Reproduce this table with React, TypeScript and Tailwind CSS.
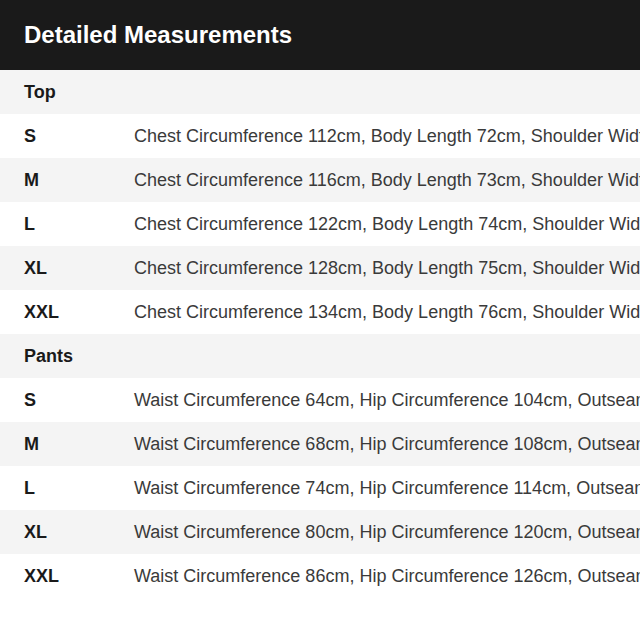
const sections = [
  {
    name: "Top",
    rows: [
      { size: "S", text: "Chest Circumference 112cm, Body Length 72cm, Shoulder Width 50cm, Sleeve Length 60cm" },
      { size: "M", text: "Chest Circumference 116cm, Body Length 73cm, Shoulder Width 52cm, Sleeve Length 61cm" },
      { size: "L", text: "Chest Circumference 122cm, Body Length 74cm, Shoulder Width 54cm, Sleeve Length 62cm" },
      { size: "XL", text: "Chest Circumference 128cm, Body Length 75cm, Shoulder Width 56cm, Sleeve Length 63cm" },
      { size: "XXL", text: "Chest Circumference 134cm, Body Length 76cm, Shoulder Width 58cm, Sleeve Length 64cm" },
    ],
  },
  {
    name: "Pants",
    rows: [
      { size: "S", text: "Waist Circumference 64cm, Hip Circumference 104cm, Outseam Length 98cm" },
      { size: "M", text: "Waist Circumference 68cm, Hip Circumference 108cm, Outseam Length 99cm" },
      { size: "L", text: "Waist Circumference 74cm, Hip Circumference 114cm, Outseam Length 100cm" },
      { size: "XL", text: "Waist Circumference 80cm, Hip Circumference 120cm, Outseam Length 101cm" },
      { size: "XXL", text: "Waist Circumference 86cm, Hip Circumference 126cm, Outseam Length 102cm" },
    ],
  },
];

export default function App() {
  let index = 0;
  return (
    <div className="w-[640px] h-[622px] bg-white overflow-hidden font-['Liberation_Sans',Arial,sans-serif]">
      <div className="h-[70px] bg-[#1a1a1a] px-6 flex items-center">
        <h1 className="text-[24px] font-bold text-white">Detailed Measurements</h1>
      </div>
      <div className="flex flex-col">
        {sections.map((section) => {
          const headRow = (
            <div key={section.name} className="h-11 px-6 pt-px flex items-center bg-[#f4f4f4]">
              <span className="text-[18px] font-bold text-[#1a1a1a]">{section.name}</span>
            </div>
          );
          index++;
          return [
            headRow,
            ...section.rows.map((row) => {
              const shaded = index++ % 2 === 0;
              return (
                <div
                  key={section.name + row.size}
                  className={`h-11 px-6 pt-px flex items-center whitespace-nowrap ${shaded ? "bg-[#f4f4f4]" : "bg-white"}`}
                >
                  <span className="w-[110px] shrink-0 text-[18px] font-bold text-[#1a1a1a]">{row.size}</span>
                  <span className="text-[18px] text-[#3a3a3a]">{row.text}</span>
                </div>
              );
            }),
          ];
        })}
      </div>
    </div>
  );
}
